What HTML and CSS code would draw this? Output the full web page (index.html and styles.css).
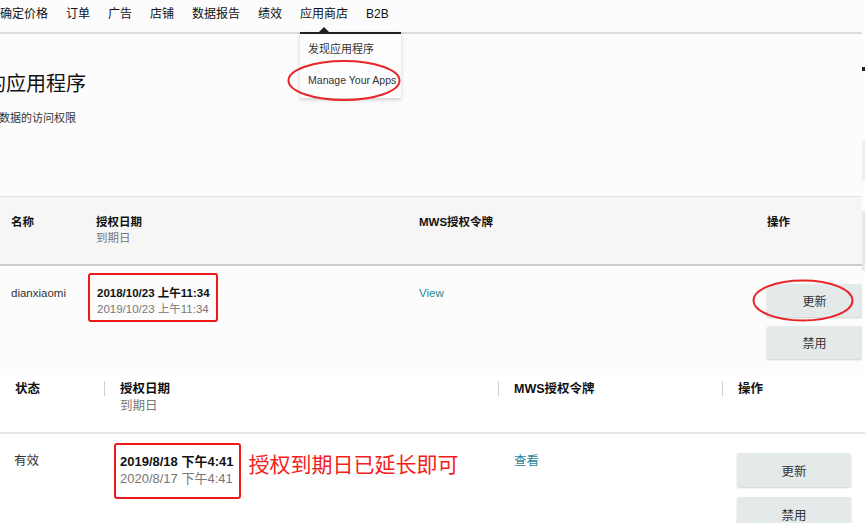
FILE: index.html
```html
<!DOCTYPE html>
<html lang="zh-CN">
<head>
<meta charset="utf-8">
<title>管理您的应用程序</title>
<link rel="stylesheet" href="styles.css">
</head>
<body>
<div class="page">
  <section class="shot shot-top">
    <div class="main">
      <nav class="nav">
        <span class="nav-item">确定价格</span>
        <span class="nav-item">订单</span>
        <span class="nav-item">广告</span>
        <span class="nav-item">店铺</span>
        <span class="nav-item">数据报告</span>
        <span class="nav-item">绩效</span>
        <span class="nav-item active">应用商店
          <div class="menu">
            <div class="menu-item">发现应用程序</div>
            <div class="menu-item">Manage Your Apps</div>
          </div>
        </span>
        <span class="nav-item">B2B</span>
      </nav>
      <header class="head">
        <h1 class="title"><span class="cut">的</span>应用程序</h1>
        <p class="sub">数据的访问权限</p>
      </header>
      <div class="tbl">
        <div class="thead grid1">
          <div class="c1">名称</div>
          <div class="c2"><b>授权日期</b><span class="muted">到期日</span></div>
          <div class="c3"><b>MWS授权令牌</b></div>
          <div class="c4"><b>操作</b></div>
        </div>
        <div class="trow grid1">
          <div class="c1 cell-text">dianxiaomi</div>
          <div class="c2">
            <div class="datebox box1">
              <b>2018/10/23 上午11:34</b>
              <span class="muted">2019/10/23 上午11:34</span>
            </div>
          </div>
          <div class="c3 cell-text"><a class="link">View</a></div>
          <div class="c4 btns btns1">
            <button class="btn">更新</button>
            <button class="btn">禁用</button>
          </div>
        </div>
      </div>
    </div>
    <div class="edge">
      <span class="tick"></span>
      <span class="band"></span>
      <span class="band b2"></span>
    </div>
  </section>

  <section class="shot shot-bottom">
    <div class="thead2 grid2">
      <div class="d1"><b>状态</b></div>
      <div class="d2 sep"><b>授权日期</b><span class="muted">到期日</span></div>
      <div class="d3 sep"><b>MWS授权令牌</b></div>
      <div class="d4 sep"><b>操作</b></div>
    </div>
    <div class="trow2 grid2">
      <div class="d1 cell-text2">有效</div>
      <div class="d2 datecell">
        <div class="datebox box2">
          <b>2019/8/18 下午4:41</b>
          <span class="muted">2020/8/17 下午4:41</span>
        </div>
        <span class="note">授权到期日已延长即可</span>
      </div>
      <div class="d3 cell-text2"><a class="link">查看</a></div>
      <div class="d4 btns btns2">
        <button class="btn">更新</button>
        <button class="btn">禁用</button>
      </div>
    </div>
  </section>

  <svg class="marks" width="865" height="523" viewBox="0 0 865 523" aria-hidden="true">
    <ellipse cx="344" cy="80.5" rx="55.5" ry="19.5" fill="none" stroke="#e8262a" stroke-width="2"/>
    <ellipse cx="803" cy="300.5" rx="49.5" ry="20" fill="none" stroke="#e8262a" stroke-width="2"/>
  </svg>
</div>
</body>
</html>
```

FILE: styles.css
```css
* { box-sizing: border-box; }
html, body { margin: 0; padding: 0; background: #ffffff; }
body {
  font-family: "Liberation Sans", "Noto Sans CJK SC", sans-serif;
  color: #111;
}
.page {
  position: relative;
  width: 865px;
  height: 523px;
  overflow: hidden;
}
b { font-weight: 700; }

/* ---------- top screenshot ---------- */
.shot-top {
  display: flex;
  height: 375px;
  background: #fcfcfc;
}
.main { width: 862px; flex: none; }
.edge {
  flex: 1;
  display: flex;
  flex-direction: column;
  background: #fdfdfd;
}
.edge .tick { display: block; height: 4px; margin-top: 67px; background: #222; }
.edge .band { display: block; height: 40px; margin-top: 70px; background: #eeeeee; }
.edge .b2 { height: 60px; margin-top: 30px; background: #e6e9e9; }

.nav {
  display: flex;
  gap: 18px;
  height: 34px;
  border-bottom: 2px solid #dcdcdc;
  font-size: 12px;
}
.nav-item {
  position: relative;
  padding-top: 6px;
  line-height: 16px;
  height: 32px;
  white-space: nowrap;
}
.menu {
  position: absolute;
  top: 32px;
  left: 0;
  width: 101px;
  border-top: 2px solid #1f1f1f;
  background: #fdfdfd;
  box-shadow: 0 2px 4px rgba(0,0,0,0.18);
  padding-bottom: 2px;
  z-index: 2;
}
.menu::before {
  content: "";
  position: absolute;
  top: -7px;
  left: 19px;
  border: 5px solid transparent;
  border-bottom: 5px solid #1f1f1f;
  border-top: 0;
}
.menu-item {
  height: 31px;
  line-height: 31px;
  padding-left: 8px;
  font-size: 11px;
  color: #333;
  white-space: nowrap;
}
.menu-item + .menu-item { font-size: 10.5px; }

.head { padding-top: 38px; }
.title {
  margin: 0 0 0 -14px;
  font-size: 20px;
  line-height: 24px;
  font-weight: 400;
  color: #111;
}
.sub {
  margin: 14px 0 0 -1px;
  font-size: 11px;
  line-height: 16px;
  color: #333;
}

.tbl { margin-top: 70px; }
.grid1 {
  display: grid;
  grid-template-columns: 88px 331px 348px 95px;
}
.thead {
  height: 70px;
  border-top: 1px solid #e3e3e3;
  border-bottom: 2px solid #cdcdcd;
  background: #f6f6f6;
  padding-top: 17px;
  font-size: 11.5px;
  line-height: 16px;
}
.thead .c1 { padding-left: 11px; font-weight: 700; }
.thead .c2 { padding-left: 8px; display: flex; flex-direction: column; }
.muted { color: #777; font-weight: 400; }

.trow { font-size: 11.5px; line-height: 16px; }
.cell-text { padding-top: 19px; color: #333; }
.trow .c1 { padding-left: 11px; }
.link { color: #2d8597; text-decoration: none; }

.datebox {
  display: inline-flex;
  flex-direction: column;
  border: 2px solid #f01818;
  border-radius: 3px;
  white-space: nowrap;
}
.box1 {
  margin-top: 7px;
  padding: 10px 6px 3px 7px;
}

.btns { display: flex; flex-direction: column; }
.btn {
  font-family: inherit;
  border: 0;
  border-radius: 2px;
  background: #e4e9e9;
  box-shadow: 0 1px 2px rgba(0,0,0,0.18);
  color: #333;
  font-size: 12px;
  padding: 0;
}
.btns1 { margin-top: 18px; gap: 9px; }
.btns1 .btn { height: 33px; width: 95px; }

/* ---------- bottom screenshot ---------- */
.shot-bottom {
  height: 148px;
  background: #ffffff;
}
.grid2 {
  display: grid;
  grid-template-columns: 104px 394px 224px 143px;
}
.thead2 {
  height: 59px;
  padding-top: 6px;
  border-bottom: 2px solid #e6e6e6;
  font-size: 12.5px;
  line-height: 17px;
}
.thead2 .d1 { padding-left: 15px; }
.thead2 .sep {
  padding-left: 16px;
  display: flex;
  flex-direction: column;
  background: linear-gradient(#c9d2d4, #c9d2d4) no-repeat 0 0 / 1px 15px;
}
.trow2 { font-size: 12.5px; line-height: 17px; }
.cell-text2 { padding-top: 19px; color: #333; }
.trow2 .d1 { padding-left: 14px; }
.trow2 .d3 { padding-left: 16px; }
.datecell {
  display: flex;
  align-items: flex-start;
  padding-left: 10px;
}
.box2 {
  margin-top: 9px;
  padding: 8px 6px 10px 4px;
  font-size: 13px;
}
.note {
  margin-left: 7px;
  margin-top: 17px;
  font-size: 21px;
  line-height: 28px;
  color: #f51c1c;
  white-space: nowrap;
}
.btns2 { margin-top: 19px; margin-left: 15px; gap: 10px; }
.btns2 .btn { height: 34px; width: 114px; font-size: 12.5px; }

.marks {
  position: absolute;
  top: 0;
  left: 0;
  z-index: 5;
  pointer-events: none;
}
```
